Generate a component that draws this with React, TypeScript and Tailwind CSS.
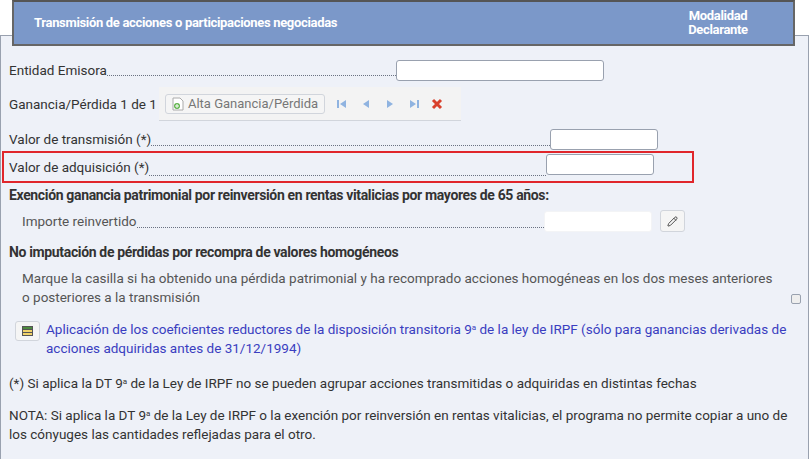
import { Pencil } from "lucide-react"

const Dots = () => <span className="flex-1 self-end mb-[5px] border-b border-dotted border-gray-500" />

function NavBtn({ d }: { d: string }) {
  return (
    <svg width="14" height="14" viewBox="0 0 14 14" className="shrink-0 text-[#8fb3e0]">
      <path d={d} fill="currentColor" />
    </svg>
  )
}

export default function App() {
  return (
    <div className="relative w-[810px] h-[459px] bg-white text-[13.5px] text-[#333] overflow-hidden" style={{ fontFamily: "Roboto, 'Liberation Sans', sans-serif" }}>
      <div className="absolute left-0 top-[35px] w-[809px] h-[430px] bg-[#eef1f8] border border-gray-400" />
      <div className="relative z-10 ml-[12px] w-[783px] h-[46px] bg-[#7b98c9] border-2 border-t-[#555] border-x-[#666] border-b-[#666] flex items-center text-white font-bold text-[13px] tracking-tight">
        <div className="pl-[20px] flex-1">Transmisión de acciones o participaciones negociadas</div>
        <div className="w-[140px] text-center leading-[14px] pr-[10px]">Modalidad<br />Declarante</div>
      </div>
      <div className="relative z-10 px-[9px]">
        <div className="flex items-center mt-[13px] h-[22px]">
          <span>Entidad Emisora</span><Dots />
          <input className="w-[208px] h-[21px] bg-white border border-gray-400 rounded-[3px] mr-[197px]" />
        </div>
        <div className="flex items-center mt-[6px] h-[34px]">
          <span className="whitespace-nowrap">Ganancia/Pérdida 1 de 1</span>
          <div className="ml-[2px] h-[34px] w-[302px] bg-[#f3f3f3] border-b border-gray-300 flex items-center gap-[10px] px-[6px] shrink-0">
            <button className="h-[20px] px-[6px] flex items-center gap-[4px] border border-gray-300 rounded-[3px] bg-[#f5f5f5] text-[#777] text-[13px] whitespace-nowrap shrink-0">
              <svg width="12" height="14" viewBox="0 0 12 14"><path d="M1 1h7l3 3v9H1z" fill="#fff" stroke="#aaa" /><circle cx="5" cy="9" r="3" fill="#5fb34a" /><path d="M5 7v4M3 9h4" stroke="#fff" /></svg>
              Alta Ganancia/Pérdida
            </button>
            <NavBtn d="M2 3h2v8H2zM11 3v8L5 7z" />
            <NavBtn d="M10 3v8L4 7z" />
            <NavBtn d="M4 3v8l6-4z" />
            <NavBtn d="M3 3v8l6-4zM10 3h2v8h-2z" />
            <svg width="12" height="12" viewBox="0 0 12 12" className="shrink-0"><path d="M2 2l8 8M10 2l-8 8" stroke="#d9412c" strokeWidth="3" /></svg>
          </div>
        </div>
        <div className="flex items-center mt-[6px] h-[24px]">
          <span>Valor de transmisión (*)</span><Dots />
          <input className="w-[108px] h-[21px] bg-white border border-gray-400 rounded-[3px] mr-[143px]" />
        </div>
        <div className="-mx-[7px] w-[692px] h-[32px] border-2 border-[#e0262b] px-[5px] flex items-center">
          <span>Valor de adquisición (*)</span><Dots />
          <input className="w-[108px] h-[21px] bg-white border border-gray-400 rounded-[3px] mr-[33px] mb-[6px]" />
        </div>
        <div className="mt-[2px] font-bold text-[14px] tracking-tight">Exención ganancia patrimonial por reinversión en rentas vitalicias por mayores de 65 años:</div>
        <div className="flex items-center pl-[13px] mt-[3px] h-[24px]">
          <span className="text-[#555]">Importe reinvertido</span><Dots />
          <input className="w-[108px] h-[21px] bg-white border border-gray-100 rounded-[3px] ml-[-2px] mr-[8px]" />
          <button className="w-[25px] h-[22px] border border-gray-300 rounded-[3px] bg-[#f5f5f5] flex items-center justify-center mr-[116px]"><Pencil size={11} color="#444" /></button>
        </div>
        <div className="mt-[9px] font-bold text-[14px] tracking-tight">No imputación de pérdidas por recompra de valores homogéneos</div>
        <div className="pl-[13px] mt-[6px] text-[#555] leading-[19px] flex">
          <div className="flex-1 pr-[10px]">Marque la casilla si ha obtenido una pérdida patrimonial y ha recomprado acciones homogéneas en los dos meses anteriores o posteriores a la transmisión</div>
          <div className="self-end mb-[3px] w-[10px] h-[10px] border border-gray-400 rounded-[2px] bg-[#eee]" />
        </div>
        <div className="flex mt-[13px] pl-[6px]">
          <button className="shrink-0 w-[25px] h-[20px] border border-gray-300 rounded-[3px] bg-[#f5f5f5] flex items-center justify-center mr-[6px] mt-[1px]">
            <svg width="11" height="10" viewBox="0 0 11 10"><rect x="0.5" y="0.5" width="10" height="9" fill="#f0d26a" stroke="#555" /><path d="M0.5 3.5h10M0.5 6.5h10" stroke="#555" /><rect x="1" y="1" width="9" height="2" fill="#4c8a3d" /></svg>
          </button>
          <div className="text-[#3a3ec0] leading-[19px] w-[745px]">Aplicación de los coeficientes reductores de la disposición transitoria 9<sup className="text-[8px]">a</sup> de la ley de IRPF (sólo para ganancias derivadas de acciones adquiridas antes de 31/12/1994)</div>
        </div>
        <div className="mt-[15px]">(*) Si aplica la DT 9<sup className="text-[8px]">a</sup> de la Ley de IRPF no se pueden agrupar acciones transmitidas o adquiridas en distintas fechas</div>
        <div className="mt-[13px] leading-[19px]">NOTA: Si aplica la DT 9<sup className="text-[8px]">a</sup> de la Ley de IRPF o la exención por reinversión en rentas vitalicias, el programa no permite copiar a uno de los cónyuges las cantidades reflejadas para el otro.</div>
      </div>
    </div>
  )
}
